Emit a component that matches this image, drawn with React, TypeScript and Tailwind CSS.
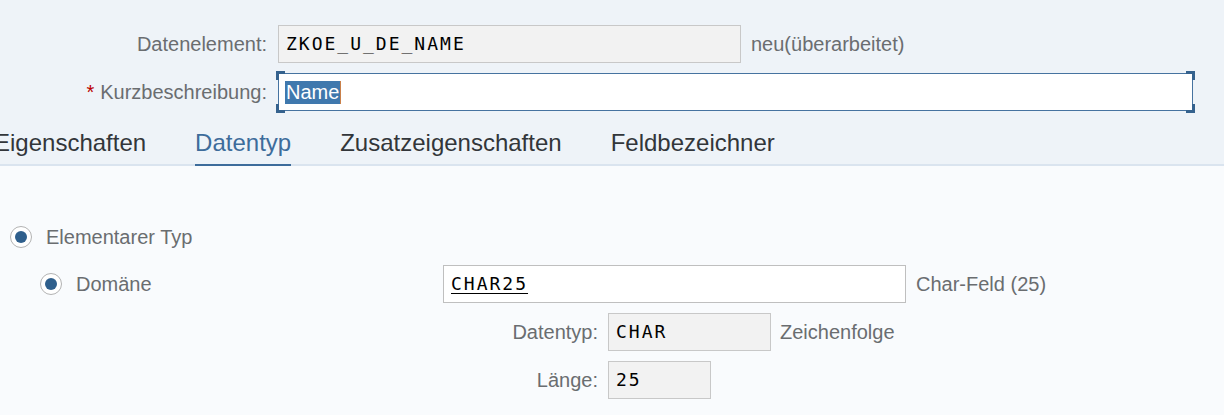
import React from 'react'

// Radio that is switched on
function Radio() {
  return (
    <span className="w-[22px] h-[22px] rounded-full border border-[#b3b3b3] bg-white flex items-center justify-center shrink-0">
      <span className="w-[12px] h-[12px] rounded-full bg-[#2f5f8c]" />
    </span>
  )
}

function Tab({ label, active }: { label: string; active?: boolean }) {
  return (
    <div
      className={
        active
          ? 'leading-[28px] pb-[7px] -mb-[2px] border-b-2 border-[#3d6c9b] text-[#3d6c9b]'
          : 'leading-[28px] pb-[7px] -mb-[2px] border-b-2 border-transparent text-[#32363a]'
      }
    >
      {label}
    </div>
  )
}

export default function App() {
  return (
    <div className="w-[1224px] h-[415px] overflow-hidden bg-[#f9fbfd] font-['Liberation_Sans',Arial,sans-serif] text-[20px] leading-[24px]">
      {/* Header with the two fields and tabs */}
      <div className="bg-[#eef3f8] border-b-2 border-[#dae4ef]">
        <div className="pt-[25px] flex flex-col gap-[10px]">
          <div className="flex items-center">
            <div className="w-[267px] text-right text-[#6a6d70]">Datenelement:</div>
            <div className="ml-[11px] w-[463px] h-[38px] border border-[#c8c8c8] bg-[#f2f2f2] flex items-center pl-[7px] font-['DejaVu_Sans_Mono',monospace] text-[18px] tracking-[2px] text-black">
              ZKOE_U_DE_NAME
            </div>
            <div className="ml-[10px] text-[#6a6d70]">neu(überarbeitet)</div>
          </div>

          <div className="flex items-center">
            <div className="w-[267px] text-right text-[#6a6d70]">
              <span className="text-[#bb0000] mr-[6px]">*</span>Kurzbeschreibung:
            </div>
            <div className="relative ml-[11px] w-[915px] h-[38px] border border-[#4673a0] bg-white flex items-center pl-[6px]">
              <span className="bg-[#3f78ad] text-white h-[23px] leading-[23px] px-[1px] text-[20px]">Name</span>
              <span className="w-[1px] h-[23px] bg-[#c9804a]" />
              {/* focus corner marks */}
              <span className="absolute -left-[3px] -top-[3px] w-[9px] h-[9px] border-l-[3px] border-t-[3px] border-[#35628e]" />
              <span className="absolute -right-[3px] -top-[3px] w-[9px] h-[9px] border-r-[3px] border-t-[3px] border-[#35628e]" />
              <span className="absolute -left-[3px] -bottom-[3px] w-[9px] h-[9px] border-l-[3px] border-b-[3px] border-[#35628e]" />
              <span className="absolute -right-[3px] -bottom-[3px] w-[9px] h-[9px] border-r-[3px] border-b-[3px] border-[#35628e]" />
            </div>
          </div>
        </div>

        <div className="flex gap-[49px] -ml-[6px] pt-[18px] text-[24px]">
          <Tab label="Eigenschaften" />
          <Tab label="Datentyp" active />
          <Tab label="Zusatzeigenschaften" />
          <Tab label="Feldbezeichner" />
        </div>
      </div>

      {/* Datentyp tab content */}
      <div className="pt-[59px] flex flex-col">
        <div className="h-[24px] flex items-center pl-[10px] gap-[14px] text-[#6a6d70]">
          <Radio />
          <span>Elementarer Typ</span>
        </div>

        <div className="mt-[16px] flex items-center">
          <div className="w-[443px] pl-[40px] flex items-center gap-[14px] text-[#6a6d70]">
            <Radio />
            <span>Domäne</span>
          </div>
          <div className="w-[463px] h-[38px] border border-[#bfbfbf] bg-white flex items-center pl-[7px] font-['DejaVu_Sans_Mono',monospace] text-[18px] tracking-[2px] text-black">
            <span className="underline decoration-1 underline-offset-[3px]">CHAR25</span>
          </div>
          <div className="ml-[10px] text-[#6a6d70]">Char-Feld (25)</div>
        </div>

        <div className="mt-[10px] flex items-center">
          <div className="w-[598px] text-right text-[#6a6d70]">Datentyp:</div>
          <div className="ml-[10px] w-[163px] h-[38px] border border-[#c8c8c8] bg-[#f2f2f2] flex items-center pl-[7px] font-['DejaVu_Sans_Mono',monospace] text-[18px] tracking-[2px] text-black">
            CHAR
          </div>
          <div className="ml-[9px] text-[#6a6d70]">Zeichenfolge</div>
        </div>

        <div className="mt-[10px] flex items-center">
          <div className="w-[598px] text-right text-[#6a6d70]">Länge:</div>
          <div className="ml-[10px] w-[103px] h-[38px] border border-[#c8c8c8] bg-[#f2f2f2] flex items-center pl-[7px] font-['DejaVu_Sans_Mono',monospace] text-[18px] tracking-[2px] text-black">
            25
          </div>
        </div>
      </div>
    </div>
  )
}
